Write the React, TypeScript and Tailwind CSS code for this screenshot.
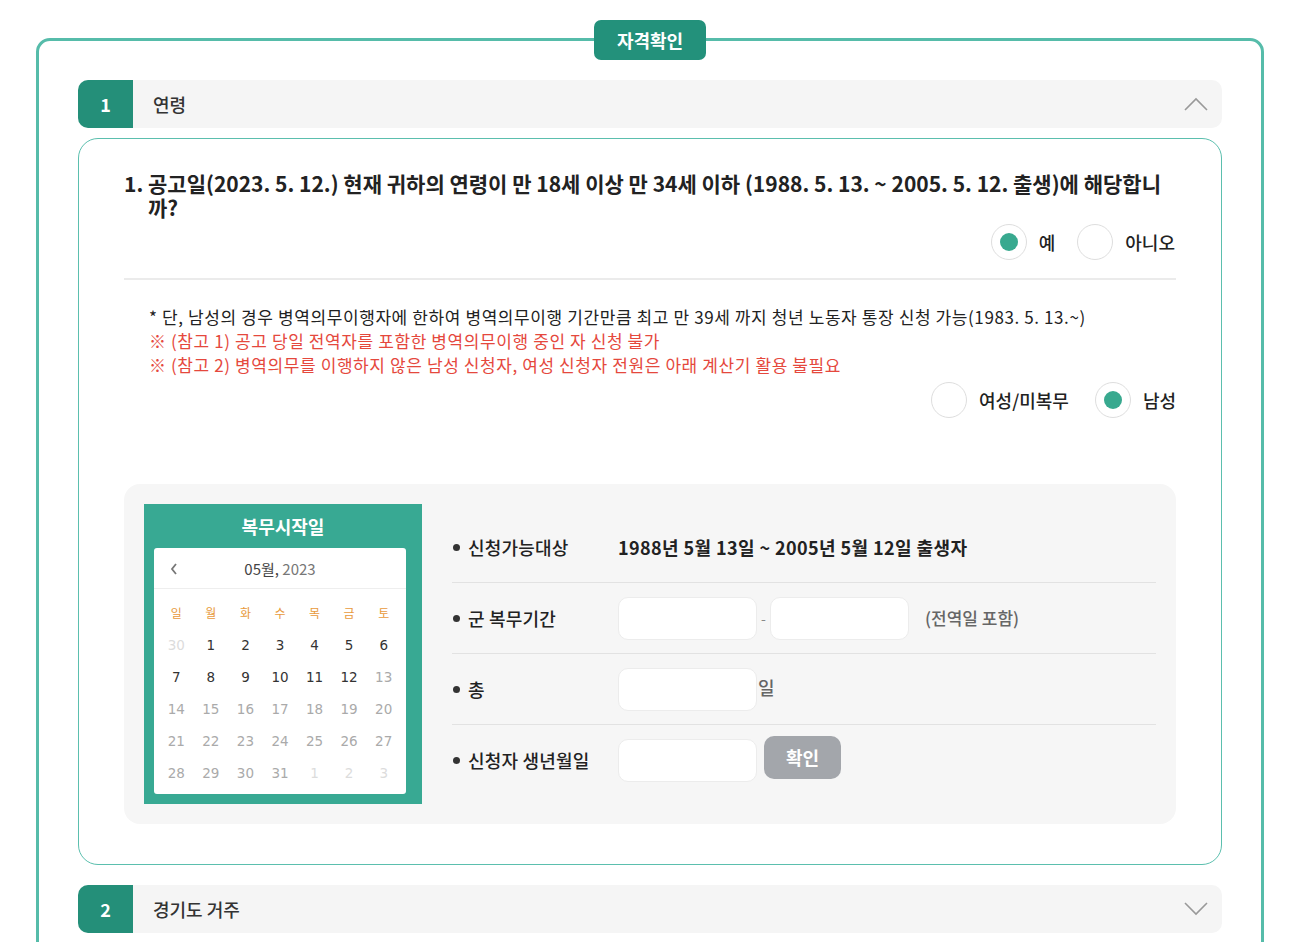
import React from 'react';

const font = { fontFamily: '"Noto Sans CJK KR", "Noto Sans", sans-serif' };

const ChevronUp = () => (
  <svg width="24" height="14" viewBox="0 0 24 14" fill="none" aria-hidden>
    <path d="M1 13 L12 2 L23 13" stroke="#999" strokeWidth="1.6" />
  </svg>
);

const ChevronDown = () => (
  <svg width="24" height="14" viewBox="0 0 24 14" fill="none" aria-hidden>
    <path d="M1 1 L12 12 L23 1" stroke="#999" strokeWidth="1.6" />
  </svg>
);

const Radio = ({ checked, label }: { checked?: boolean; label: string }) => (
  <label className="flex items-center gap-3">
    <span className="w-[36px] h-[36px] rounded-full border border-[#dedede] bg-white flex items-center justify-center">
      {checked && <span className="w-[18px] h-[18px] rounded-full bg-[#38a98f]" />}
    </span>
    <span className="text-[18px] text-[#222] font-medium">{label}</span>
  </label>
);

const SectionHeader = ({ num, title, open }: { num: string; title: string; open?: boolean }) => (
  <div className="flex items-center h-[48px] rounded-[10px] bg-[#f5f5f5]">
    <div className="w-[55px] h-full rounded-l-[10px] bg-[#248f79] flex items-center justify-center text-white text-[18px] font-bold">
      {num}
    </div>
    <div className="ml-[20px] text-[18px] text-[#333] font-medium flex-1">{title}</div>
    <div className="mr-[14px] flex items-center">{open ? <ChevronUp /> : <ChevronDown />}</div>
  </div>
);

type Day = { d: number; tone: 'off' | 'on' | 'dim' };

const days: Day[] = [
  { d: 30, tone: 'off' },
  ...Array.from({ length: 31 }, (_, i) => ({ d: i + 1, tone: (i + 1 <= 12 ? 'on' : 'dim') as Day['tone'] })),
  { d: 1, tone: 'off' },
  { d: 2, tone: 'off' },
  { d: 3, tone: 'off' },
];

const toneClass = {
  off: 'text-[#dcdcdc]',
  on: 'text-[#333]',
  dim: 'text-[#aaa]',
};

const Calendar = () => (
  <div className="w-[278px] h-[300px] bg-[#38a993] pl-[10px] pr-[16px] pb-[10px] flex flex-col shrink-0">
    <div className="h-[44px] flex items-center justify-center pl-[6px] text-white text-[18px] font-bold">복무시작일</div>
    <div className="flex-1 bg-white rounded-[3px]">
      <div className="h-[41px] border-b border-[#eee] flex items-center relative">
        <span className="absolute left-[15px] top-[13px]">
          <svg width="10" height="16" viewBox="0 0 10 16" fill="none" aria-hidden>
            <path d="M7 3 L3 8 L7 13" stroke="#777" strokeWidth="1.8" />
          </svg>
        </span>
        <div className="w-full text-center text-[15px] mt-[2px]">
          <span className="text-[#444]">05월,</span> <span className="text-[#777]">2023</span>
        </div>
      </div>
      <div className="grid grid-cols-7 px-[5px] pt-[8px]" style={{ fontFamily: '"DejaVu Sans", sans-serif' }}>
        {['일', '월', '화', '수', '목', '금', '토'].map((w) => (
          <div key={w} className="h-[32px] flex items-center justify-center text-[12px] text-[#e89a3c]" style={font}>
            {w}
          </div>
        ))}
        {days.map((x, i) => (
          <div key={i} className={`h-[32px] flex items-center justify-center text-[13.5px] ${toneClass[x.tone]}`}>
            {x.d}
          </div>
        ))}
      </div>
    </div>
  </div>
);

const Field = () => (
  <div className="w-[139px] h-[43px] rounded-[10px] border border-[#ececec] bg-white" />
);

const InfoRow = ({ label, children, last }: { label: string; children: React.ReactNode; last?: boolean }) => (
  <div className={`flex items-center h-[71px] ${last ? '' : 'border-b border-[#e2e2e2]'}`}>
    <div className="w-[166px] flex items-center shrink-0">
      <span className="w-[7px] h-[7px] rounded-full bg-[#333] ml-[1px] mr-[8px]" />
      <span className="text-[18px] text-[#222] font-medium tracking-[0.2px]">{label}</span>
    </div>
    {children}
  </div>
);

export default function App() {
  return (
    <div className="bg-white w-[1297px] h-[942px] overflow-hidden pt-[38px]" style={font}>
      <div className="relative ml-[36px] w-[1228px] border-[3px] border-[#56bcaa] rounded-[14px] px-[39px] pt-[39px] pb-[40px]">
        <div className="absolute -top-[21px] left-1/2 -translate-x-1/2 w-[112px] h-[40px] rounded-[7px] bg-[#23917b] text-white text-[18px] font-bold flex items-center justify-center">
          자격확인
        </div>

        <SectionHeader num="1" title="연령" open />

        <div className="mt-[10px] border border-[#5bbfae] rounded-[20px] px-[45px] pt-[32px] pb-[40px]">
          <div className="flex text-[21px] leading-[24px] font-bold text-[#222]">
            <span className="w-[24px] shrink-0">1.</span>
            <p>
              공고일(2023. 5. 12.) 현재 귀하의 연령이 만 18세 이상 만 34세 이하 (1988. 5. 13. ~ 2005. 5. 12. 출생)에 해당합니
              <br />
              까?
            </p>
          </div>

          <div className="flex justify-end gap-[22px] mt-[5px] pr-[1px]">
            <Radio checked label="예" />
            <Radio label="아니오" />
          </div>

          <div className="h-[2px] bg-[#ebebeb] mt-[18px]" />

          <div className="pl-[25px] mt-[25px] text-[17px] leading-[24px] tracking-[0.6px]">
            <p className="text-[#222]">
              * 단, 남성의 경우 병역의무이행자에 한하여 병역의무이행 기간만큼 최고 만 39세 까지 청년 노동자 통장 신청 가능(1983. 5. 13.~)
            </p>
            <p className="text-[#e5483d]">※ (참고 1) 공고 당일 전역자를 포함한 병역의무이행 중인 자 신청 불가</p>
            <p className="text-[#e5483d]">
              ※ (참고 2) 병역의무를 이행하지 않은 남성 신청자, 여성 신청자 전원은 아래 계산기 활용 불필요
            </p>
          </div>

          <div className="flex justify-end gap-[26px] mt-[5px]">
            <Radio label="여성/미복무" />
            <Radio checked label="남성" />
          </div>

          <div className="mt-[66px] bg-[#f6f6f6] rounded-[16px] p-[20px] flex items-center">
            <Calendar />
            <div className="flex-1 ml-[30px]">
              <InfoRow label="신청가능대상">
                <span className="text-[18px] font-bold text-[#222] tracking-[0.4px]">1988년 5월 13일 ~ 2005년 5월 12일 출생자</span>
              </InfoRow>
              <InfoRow label="군 복무기간">
                <Field />
                <span className="w-[13px] text-center text-[14px] text-[#888]">-</span>
                <Field />
                <span className="ml-[16px] text-[17px] text-[#666] font-medium">(전역일 포함)</span>
              </InfoRow>
              <InfoRow label="총">
                <Field />
                <span className="ml-[1px] -mt-[4px] text-[18px] text-[#666] font-medium">일</span>
              </InfoRow>
              <InfoRow label="신청자 생년월일" last>
                <Field />
                <button
                  type="button"
                  className="ml-[7px] -mt-[6px] w-[77px] h-[43px] rounded-[10px] bg-[#a3a6ab] text-white text-[18px] font-bold"
                >
                  확인
                </button>
              </InfoRow>
            </div>
          </div>
        </div>

        <div className="mt-[20px]">
          <SectionHeader num="2" title="경기도 거주" />
        </div>
      </div>
    </div>
  );
}
